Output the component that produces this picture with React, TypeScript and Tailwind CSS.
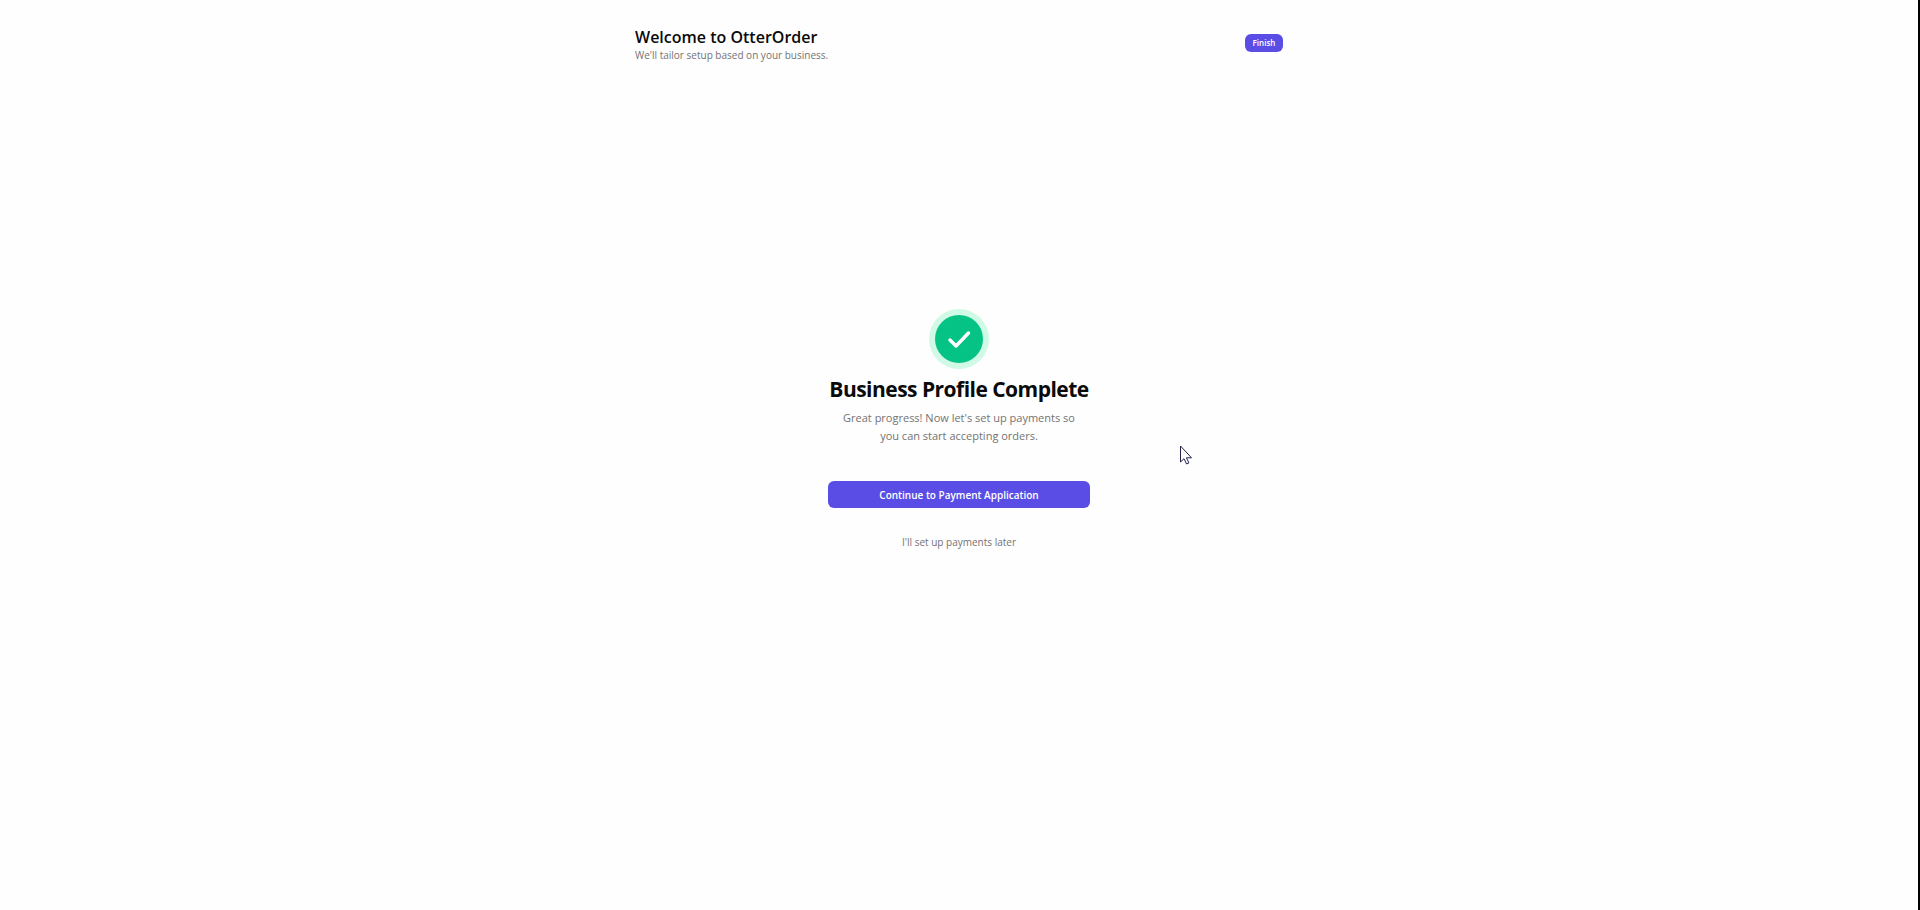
import { useState } from 'react';

export default function App() {
  const [done, setDone] = useState(false);

  return (
    <div className="flex min-h-screen flex-col border-r-2 border-black bg-[#fefefe] font-['Open_Sans','Noto_Sans',sans-serif] text-[#0a0a0a]">
      <header className="mx-auto flex w-full max-w-[648px] items-center justify-between pt-[25px]">
        <div>
          <h1 className="text-[16px] leading-6 font-semibold">Welcome to OtterOrder</h1>
          <p className="text-[10px] leading-3 text-[#737373]">We'll tailor setup based on your business.</p>
        </div>
        <button
          onClick={() => setDone(true)}
          disabled={done}
          className="h-[18px] w-[38px] rounded-md bg-[#5a4de6] text-[8px] leading-3 font-semibold text-white"
        >
          Finish
        </button>
      </header>

      <main className="mx-auto flex w-[262px] flex-col items-center pt-[248px] text-center">
        <div className="flex size-[60px] items-center justify-center rounded-full bg-[#d0fae5]">
          <div className="flex size-12 items-center justify-center rounded-full bg-[#05c285]">
            <svg viewBox="0 0 24 24" className="size-6" fill="none" stroke="white" strokeWidth="3.4" strokeLinecap="round" strokeLinejoin="round">
              <path d="M3 13l6 6L21.5 6" />
            </svg>
          </div>
        </div>
        <h2 className="mt-1 text-[21px] leading-8 font-bold tracking-tight whitespace-nowrap">Business Profile Complete</h2>
        <p className="mt-1 text-[11px] leading-[18px] text-[#737373]">
          Great progress! Now let's set up payments so
          <br />
          you can start accepting orders.
        </p>
        <button className="mt-9 h-[27px] w-full rounded-md bg-[#5a4de6] text-[10px] leading-4 font-semibold text-white">
          Continue to Payment Application
        </button>
        <button className="mt-[26px] text-[10px] leading-4 text-[#737373]">I'll set up payments later</button>
      </main>

      {/* Mouse pointer */}
      <svg className="pointer-events-none absolute top-[445px] left-[1180px] h-5 w-3" viewBox="0 0 12 20" fill="white" stroke="#20204a">
        <path d="M.5 1v16l3.5-3.3 2.6 5.3 2.3-1.1-2.5-5.1h5.1z" />
      </svg>
    </div>
  );
}
